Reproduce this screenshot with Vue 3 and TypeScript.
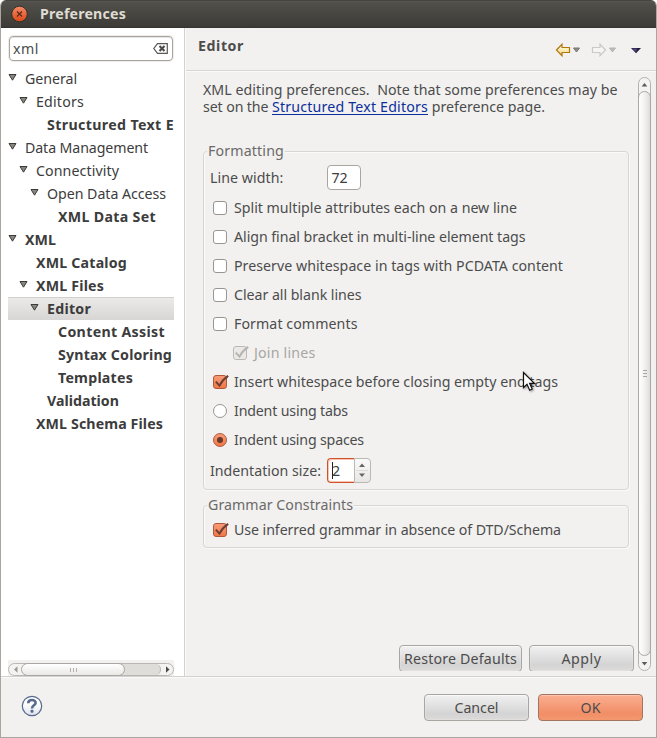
<script setup lang="ts">
interface TreeNode { label: string; depth: number; width: number; open?: boolean; bold?: boolean; selected?: boolean }
interface Option { label: string; width: number; kind: 'check' | 'radio'; on?: boolean; disabled?: boolean }

const tree: TreeNode[] = [
  { label: 'General', depth: 0, width: 52, open: true },
  { label: 'Editors', depth: 1, width: 48, open: true },
  { label: 'Structured Text E', depth: 2, width: 127, bold: true },
  { label: 'Data Management', depth: 0, width: 123, open: true },
  { label: 'Connectivity', depth: 1, width: 83, open: true },
  { label: 'Open Data Access', depth: 2, width: 119, open: true },
  { label: 'XML Data Set', depth: 3, width: 98, bold: true },
  { label: 'XML', depth: 0, width: 31, open: true, bold: true },
  { label: 'XML Catalog', depth: 1, width: 91, bold: true },
  { label: 'XML Files', depth: 1, width: 68, open: true, bold: true },
  { label: 'Editor', depth: 2, width: 44, open: true, bold: true, selected: true },
  { label: 'Content Assist', depth: 3, width: 107, bold: true },
  { label: 'Syntax Coloring', depth: 3, width: 114, bold: true },
  { label: 'Templates', depth: 3, width: 75, bold: true },
  { label: 'Validation', depth: 2, width: 72, bold: true },
  { label: 'XML Schema Files', depth: 1, width: 127, bold: true },
]

const options: Option[] = [
  { label: 'Split multiple attributes each on a new line', width: 283, kind: 'check' },
  { label: 'Align final bracket in multi-line element tags', width: 291.5, kind: 'check' },
  { label: 'Preserve whitespace in tags with PCDATA content', width: 329, kind: 'check' },
  { label: 'Clear all blank lines', width: 127.5, kind: 'check' },
  { label: 'Format comments', width: 123.5, kind: 'check' },
  { label: 'Join lines', width: 61.5, kind: 'check', on: true, disabled: true },
  { label: 'Insert whitespace before closing empty end tags', width: 324, kind: 'check', on: true },
  { label: 'Indent using tabs', width: 114, kind: 'radio' },
  { label: 'Indent using spaces', width: 130, kind: 'radio', on: true },
]

const vFit = {
  mounted(el: HTMLElement, binding: { value: number }) {
    const natural = el.getBoundingClientRect().width
    const count = (el.textContent ?? '').length
    el.style.letterSpacing = `${(binding.value - natural) / count}px`
  },
}
</script>

<template>
  <div class="window">
    <header class="titlebar">
      <svg class="close" width="18" height="18" viewBox="0 0 18 18">
        <defs><linearGradient id="closeFill" x1="0" y1="0" x2="0" y2="1"><stop offset="0" stop-color="#f58a68" /><stop offset="1" stop-color="#dd4814" /></linearGradient></defs>
        <circle cx="9.5" cy="9" r="7.8" fill="url(#closeFill)" stroke="#33322e" />
        <path d="M7 6.5l5 5M12 6.5l-5 5" stroke="#5a2a1a" stroke-width="1.3" />
      </svg>
      <span v-fit="86" class="t title">Preferences</span>
    </header>

    <div class="columns">
      <aside class="side">
        <div class="search">
          <span v-fit="26" class="t">xml</span>
          <svg width="15" height="11" viewBox="0 0 15 11">
            <path d="M4.5 .7H14.3V10.3H4.5L.8 5.5z" fill="#fff" stroke="#5a5954" stroke-width="1.2" />
            <path d="M6.5 3l5 5M11.5 3l-5 5" stroke="#4a4945" stroke-width="2.1" />
          </svg>
        </div>
        <div class="tree">
          <div v-for="n in tree" :key="n.label" class="node" :class="['d' + n.depth, { bold: n.bold, selected: n.selected }]">
            <svg class="arrow" width="9" height="8" viewBox="0 0 9 8">
              <path v-if="n.open" d="M1 1.5H8L4.5 7.2z" fill="#888681" stroke="#3c3b37" />
            </svg>
            <span v-fit="n.width" class="t">{{ n.label }}</span>
          </div>
        </div>
        <div class="hscroll">
          <div class="htrack">
            <svg width="12" height="11" viewBox="0 0 12 11"><path d="M8.5 2.3v6.4L5 5.5z" fill="#9b9a96" /></svg>
            <div class="hthumb"><i /><i /><i /></div>
            <div class="hrest" />
            <svg width="12" height="11" viewBox="0 0 12 11"><path d="M5 2.3v6.4L8.5 5.5z" fill="#4c4b47" /></svg>
          </div>
        </div>
      </aside>

      <main class="main">
        <div class="head">
          <span v-fit="46" class="t heading">Editor</span>
          <svg width="90" height="16" viewBox="0 0 90 16">
            <defs><linearGradient id="gold" x1="0" y1="0" x2="0" y2="1"><stop offset="0" stop-color="#fffbe4" /><stop offset="1" stop-color="#f8dc87" /></linearGradient></defs>
            <path d="M1.5 8L7 2.3V5.5H14.5V10.5H7V13.7z" fill="url(#gold)" stroke="#b0770d" stroke-width="1.2" />
            <path d="M18.5 6h6L21.5 10z" fill="#8d8c89" stroke="#777672" />
            <path d="M50.5 8L45 2.3V5.5H37.5V10.5H45V13.7z" fill="#f6f5f4" stroke="#cbc9c5" stroke-width="1.2" />
            <path d="M54.5 6h6L57.5 10z" fill="#bdbbb8" stroke="#b6b4b1" />
            <path d="M76 6H86L81 11.3z" fill="#211c3b" /><path d="M77 6.5h5L81 10z" fill="#514782" />
          </svg>
        </div>

        <div class="body">
          <div class="content">
            <div class="intro">
              <div><span v-fit="414.5" class="t">XML editing preferences.&nbsp; Note that some preferences may be</span></div>
              <div class="line"><span v-fit="69" class="t pre">set on the </span><a v-fit="156" class="t link">Structured Text Editors</a><span v-fit="117" class="t pre"> preference page.</span></div>
            </div>

            <section class="group formatting">
              <h2><span v-fit="76" class="t">Formatting</span></h2>
              <div class="field"><span v-fit="73.5" class="t">Line width:</span><div class="input"><span v-fit="16" class="t">72</span></div></div>
              <div v-for="o in options" :key="o.label" class="option" :class="{ disabled: o.disabled }">
                <span class="mark" :class="[o.kind, { on: o.on }]">
                  <svg v-if="o.on && o.kind === 'check'" width="16" height="14" viewBox="0 0 16 14"><path d="M2.8 6.6L6.5 10.6C8.4 6.8 11 3.6 15.2 .8" fill="none" stroke="currentColor" stroke-width="2" /></svg>
                </span>
                <span v-fit="o.width" class="t">{{ o.label }}</span>
              </div>
              <div class="indent">
                <span v-fit="111" class="t">Indentation size:</span>
                <div class="spinner">
                  <div class="value"><i class="caret" /><span v-fit="8" class="t">2</span></div>
                  <div class="steps">
                    <svg width="16" height="24" viewBox="0 0 16 24"><path d="M5 9h6L8 5.5zM5 15.5h6L8 19z" fill="#666561" /><path d="M2 12.5h12" stroke="#dddbd8" /></svg>
                  </div>
                </div>
              </div>
            </section>

            <section class="group grammar">
              <h2><span v-fit="145" class="t">Grammar Constraints</span></h2>
              <div class="option">
                <span class="mark check on"><svg width="16" height="14" viewBox="0 0 16 14"><path d="M2.8 6.6L6.5 10.6C8.4 6.8 11 3.6 15.2 .8" fill="none" stroke="currentColor" stroke-width="2" /></svg></span>
                <span v-fit="327" class="t">Use inferred grammar in absence of DTD/Schema</span>
              </div>
            </section>

            <div class="actions">
              <button class="wide"><span v-fit="113" class="t">Restore Defaults</span></button>
              <button><span v-fit="40" class="t">Apply</span></button>
            </div>
          </div>

          <div class="vscroll">
            <svg width="11" height="13" viewBox="0 0 11 13"><path d="M2.7 8.5h5.6L5.5 5z" fill="#5c5b57" /></svg>
            <div class="vthumb"><i /><i /><i /></div>
            <svg width="11" height="14" viewBox="0 0 11 14"><path d="M2.7 6h5.6L5.5 9.5z" fill="#5c5b57" /></svg>
          </div>
        </div>
      </main>
    </div>

    <footer class="footer">
      <svg class="help" width="22" height="22" viewBox="0 0 22 22">
        <defs><linearGradient id="helpFill" x1="0" y1="0" x2="0" y2="1"><stop offset=".4" stop-color="#fdfdfd" /><stop offset="1" stop-color="#dfe2ea" /></linearGradient></defs>
        <circle cx="11" cy="11" r="9.7" fill="url(#helpFill)" stroke="#56698f" stroke-width="1.2" />
        <path d="M7.2 8.3C7.2 3.9 14.8 4.1 14.6 8C14.5 10.4 11 10.3 11 13.4" fill="none" stroke="#56698f" stroke-width="2.6" />
        <rect x="9.5" y="14.8" width="3" height="3" rx="1" fill="#56698f" />
      </svg>
      <div class="confirm">
        <button><span v-fit="44" class="t">Cancel</span></button>
        <button class="primary"><span v-fit="20" class="t">OK</span></button>
      </div>
    </footer>

    <svg class="pointer" width="15" height="22" viewBox="0 0 15 22">
      <path d="M1.5 1.5V16.6L5 13.3L7.7 19.2L10.2 18L7.6 12.3H12.3z" fill="#fff" stroke="#111" stroke-width="1.2" />
    </svg>
  </div>
</template>

<style>
body { margin: 0; background: #fff; overflow: hidden; }
</style>

<style scoped>
* { box-sizing: border-box; }
.window {
  position: relative; width: 657px; height: 738px; display: flex; flex-direction: column;
  font: 14.2px/18px "Noto Sans", "Open Sans", sans-serif; color: #4c4c4c; background: #f2f1f0;
  border: 1px solid #aaa69f; border-top: 0; border-radius: 6px 6px 0 0; overflow: hidden;
}
.t { display: inline-block; white-space: nowrap; }
.pre { white-space: pre; }
.titlebar {
  height: 28px; flex: none; margin: 0 -1px; padding-left: 10px; display: flex; align-items: center; gap: 12px;
  background: linear-gradient(#33322e 0, #57564f 1px, #504f49 3px, #3d3c38 26px, #33322e); color: #dfdbd2; font-weight: 700;
}
.columns { height: 648px; flex: none; display: flex; }
.side { width: 184px; flex: none; background: #fff; border-right: 1px solid #d4d2cf; padding: 8px 0 0 7px; display: flex; flex-direction: column; }
.search {
  width: 164px; height: 25px; margin-left: 1px; flex: none; padding: 0 4px 0 3px; display: flex; align-items: center; justify-content: space-between;
  border: 1px solid #a9a59f; border-radius: 4px; box-shadow: 0 0 0 1px #efedeb, inset 0 1px #e6e4e2;
}
.tree { width: 166px; margin-top: 6px; color: #3c3c3c; overflow: hidden; }
.node { height: 23px; display: flex; align-items: center; }
.arrow { flex: none; margin: -4px 8px 0 0; }
.d1 { padding-left: 11px; }
.d2 { padding-left: 22px; }
.d3 { padding-left: 33px; }
.bold { font-weight: 700; }
.selected { background: linear-gradient(#ebeae9, #d8d6d4); border-top: 1px solid #d2d0cd; }
.hscroll { width: 166px; height: 16px; margin-top: auto; padding-top: 3px; background: #f2f1f0; }
.htrack { height: 13px; display: flex; border: 1px solid #bab7b3; border-radius: 7px; background: #f4f3f2; }
.hthumb {
  position: relative; z-index: 1; width: 104px; height: 13px; margin-top: -1px; display: flex; align-items: center; justify-content: center; gap: 2px;
  border: 1px solid #aaa7a2; border-radius: 7px; background: linear-gradient(#fff, #e9e8e6);
}
.hthumb i { width: 1px; height: 4px; background: #b5b2ae; }
.hrest { flex: 1; margin-left: -7px; border-right: 1px solid #bab7b3; border-radius: 0 7px 7px 0; background: #dfddda; }

.main { flex: 1; min-width: 0; border-left: 1px solid #fafafa; }
.head { height: 43px; padding: 0 11px 6px 12px; display: flex; align-items: center; justify-content: space-between; border-bottom: 1px solid #d8d6d3; box-shadow: 0 1px #fafafa; }
.head svg { margin-top: 7px; }
.heading { font-weight: 700; }
.body { height: 600px; display: flex; justify-content: space-between; padding: 6px 5px 0 17px; }
.content { width: 431px; height: 594px; display: flex; flex-direction: column; }
.intro { height: 74px; padding-top: 4px; line-height: 17px; flex: none; }
.intro .t, .intro div { height: 17px; }
.line { display: flex; }
.link { color: #0c2f9c; text-decoration: underline; text-underline-offset: 2px; }
.group { width: 426px; flex: none; border: 1px solid #d8d6d3; border-radius: 4px; box-shadow: 1px 1px #fafafa, inset 1px 1px #fafafa; }
.group h2 { width: max-content; height: 18px; margin: -10px 0 0 3px; padding: 0 1px; font: inherit; color: #6b6a68; background: #f2f1f0; }
.formatting { height: 339px; }
.grammar { height: 43px; margin-top: 15px; }
.grammar .option { margin-top: 1px; }
.field { height: 33px; padding: 2px 0 0 6px; display: flex; align-items: center; gap: 43px; }
.input { width: 34px; height: 25px; display: flex; align-items: center; padding-left: 4px; border: 1px solid #a9a59f; border-radius: 4px; background: #fff; color: #3c3c3c; }
.option { height: 29px; padding-left: 9px; display: flex; align-items: center; gap: 7px; }
.disabled { padding-left: 29px; color: #a8a6a3; }
.mark { width: 14px; height: 14px; flex: none; display: flex; border: 1px solid #999590; border-radius: 3px; background: #fff; color: #6b3f33; }
.mark svg { margin: -1px; flex: none; }
.mark.on { border-color: #b0583b; background: linear-gradient(#f89b78, #f07746); }
.mark.radio { border-radius: 50%; align-items: center; justify-content: center; }
.mark.radio.on::after { content: ""; width: 6px; height: 6px; border-radius: 50%; background: #67392a; }
.disabled .mark { border-color: #bcb9b5; background: #ebe9e7; color: #b7b4b0; }
.indent { height: 31px; margin-top: 1px; padding-left: 6px; display: flex; align-items: center; gap: 6px; }
.spinner { width: 44px; height: 25px; display: flex; }
.value { width: 27px; display: flex; align-items: center; padding-left: 4px; border: 1px solid #d1512b; border-right: 0; border-radius: 4px 0 0 4px; background: #fff; box-shadow: inset 1px 1px #f6c4b3, inset 0 -1px #f6c4b3; color: #3c3c3c; }
.caret { width: 1px; height: 17px; margin-right: -1px; background: #222; }
.steps { width: 17px; border: 1px solid #bbb7b2; border-radius: 0 4px 4px 0; background: linear-gradient(#faf9f9, #e8e6e4); }
.steps svg { display: block; margin: -1px 0 0 -1px; }
.actions { height: 26px; margin-top: auto; display: flex; gap: 7px; overflow: hidden; flex: none; }
button {
  width: 105px; height: 27px; flex: none; padding: 0; display: flex; align-items: center; justify-content: center;
  font: inherit; color: inherit; border: 1px solid #a9a6a2; border-radius: 4px;
  background: linear-gradient(#f2f1f1, #d5d4d4 75%, #dcdbda); box-shadow: inset 0 0 0 1px #f5f4f433, inset 0 1px #fafafa;
}
.wide { width: 123px; margin-left: 196px; }
.primary { border-color: #a3745f; background: linear-gradient(#fbae91, #f18e66 75%, #f39870); box-shadow: inset 0 1px #fdc3ae; }
.vscroll { width: 13px; height: 594px; display: flex; flex-direction: column; border: 1px solid #b5b2ae; border-radius: 7px; background: #f4f3f2; }
.vscroll svg { display: block; flex: none; }
.vthumb { flex: 1; margin: 0 -1px; display: flex; flex-direction: column; align-items: center; justify-content: center; gap: 2px; border: 1px solid #aaa7a2; border-radius: 7px; background: linear-gradient(90deg, #fff, #f4f3f2 45%, #dfddda); }
.vthumb i { width: 4px; height: 1px; background: #aaa7a3; }
.footer { flex: 1; display: flex; align-items: center; justify-content: space-between; padding: 1px 13px 0 20px; border-top: 1px solid #d3d1ce; box-shadow: inset 0 1px #fafafa; }
.help { margin-top: -4px; }
.confirm { display: flex; gap: 9px; }
.pointer { position: absolute; left: 521px; top: 371px; filter: drop-shadow(1px 1px 1px #0006); }
</style>
